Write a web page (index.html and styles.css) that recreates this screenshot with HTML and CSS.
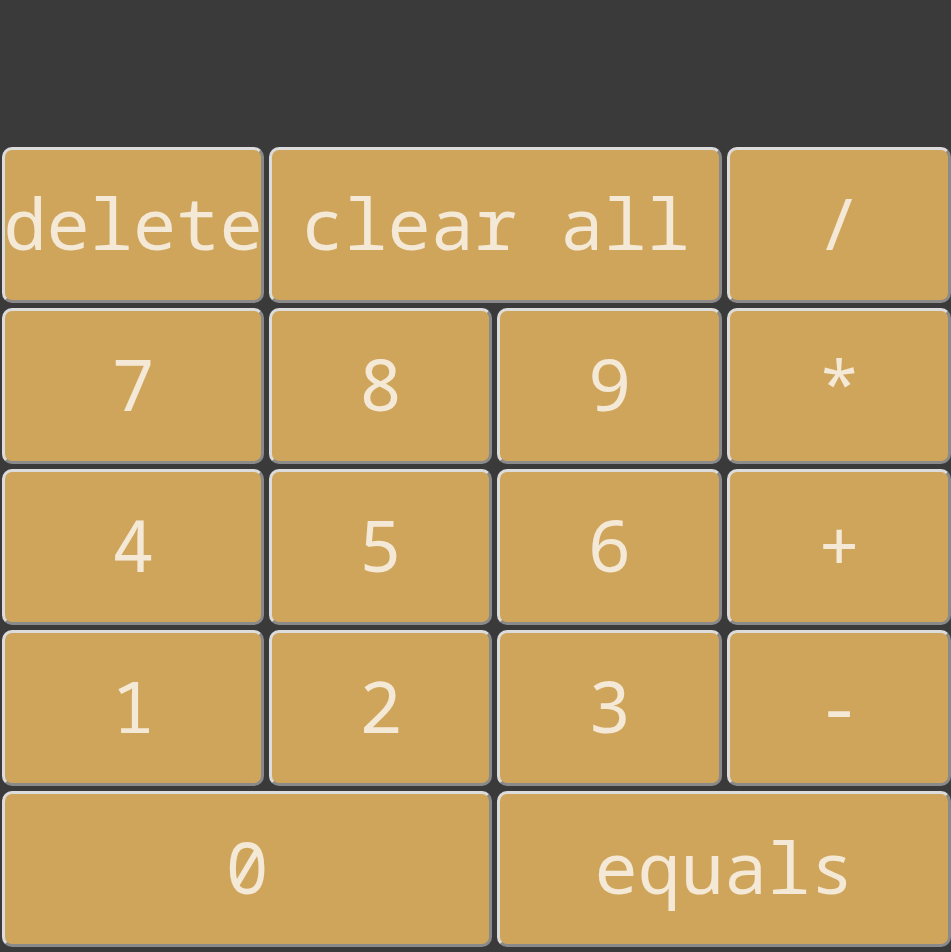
FILE: index.html
```html
<!DOCTYPE html>
<html>
<head>
<meta charset="utf-8">
<link rel="stylesheet" href="styles.css">
</head>
<body>
<div class="calc">
  <div class="display"></div>
  <div class="keys">
    <button class="key">delete</button>
    <button class="key span2">clear all</button>
    <button class="key">/</button>
    <button class="key">7</button>
    <button class="key">8</button>
    <button class="key">9</button>
    <button class="key">*</button>
    <button class="key">4</button>
    <button class="key">5</button>
    <button class="key">6</button>
    <button class="key">+</button>
    <button class="key">1</button>
    <button class="key">2</button>
    <button class="key">3</button>
    <button class="key">-</button>
    <button class="key span2">0</button>
    <button class="key span2">equals</button>
  </div>
</div>
</body>
</html>
```
FILE: styles.css
```css
html, body {
  margin: 0;
  padding: 0;
  background: #3a3a3a;
  width: 951px;
  height: 952px;
  overflow: hidden;
}
.calc {
  display: flex;
  flex-direction: column;
}
.display {
  height: 147px;
}
.keys {
  display: grid;
  grid-template-columns: 262px 223px 225px 224px;
  grid-auto-rows: 156px;
  gap: 5px;
  padding-left: 2px;
}
.key {
  box-sizing: border-box;
  background: #cfa55b;
  color: #f4e8d6;
  font-family: "Noto Sans Mono", "DejaVu Sans Mono", monospace;
  font-size: 72px;
  border-style: solid;
  border-width: 3px;
  border-color: #dcdcdc #8a8a8a #8a8a8a #dcdcdc;
  border-radius: 10px;
  padding: 0 0 6px 0;
  margin: 0;
  display: flex;
  align-items: center;
  justify-content: center;
  white-space: nowrap;
  overflow: visible;
}
.span2 {
  grid-column: span 2;
}
```
